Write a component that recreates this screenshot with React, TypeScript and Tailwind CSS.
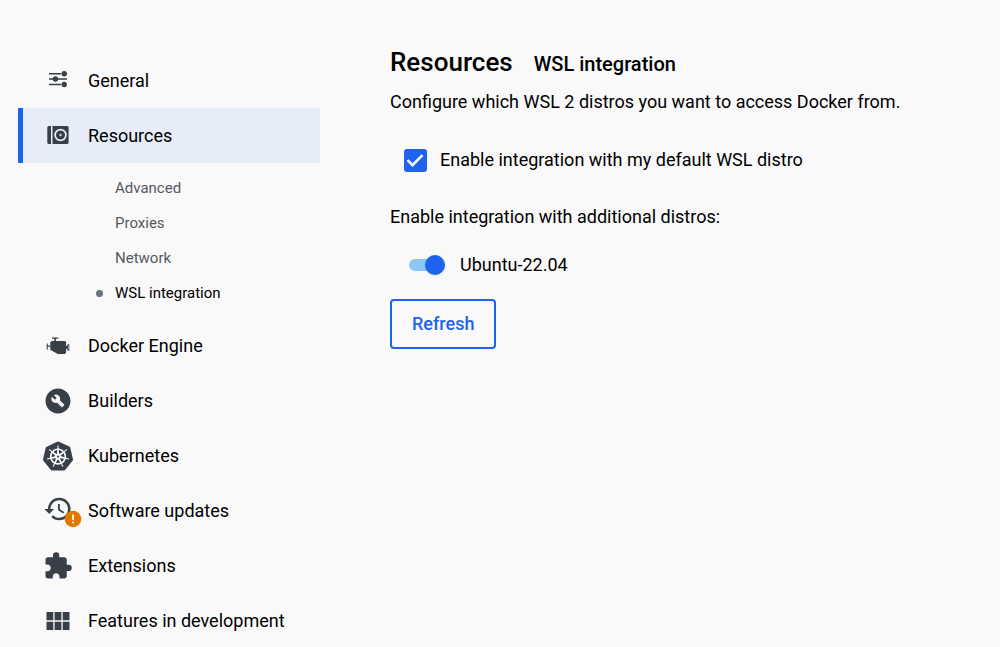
import { useState } from "react";
import type { ReactNode } from "react";
import { MdBuildCircle, MdExtension, MdHistory } from "react-icons/md";
import { SiKubernetes } from "react-icons/si";

function SlidersIcon() {
  return (
    <svg width="20" height="20" viewBox="0 0 20 20" fill="currentColor" aria-hidden="true">
      <path d="M1 1.900h12v1.600H1zM1 7.200h4v1.600H1zM10 7.200h9v1.600h-9zM1 12.700h12v1.600H1z" />
      <circle cx="16.200" cy="2.700" r="2.700" />
      <circle cx="7.400" cy="8" r="2.700" />
      <circle cx="16.200" cy="13.500" r="2.700" />
    </svg>
  );
}

function DriveIcon() {
  return (
    <svg width="22" height="20" viewBox="0 0 22 20" aria-hidden="true">
      <path d="M1.800 0H4v18H1.800A1.500 1.500 0 0 1 .3 16.500V1.500A1.500 1.500 0 0 1 1.800 0z" fill="currentColor" />
      <path d="M5.500 0h14.500a1.600 1.600 0 0 1 1.600 1.600v14.800a1.600 1.600 0 0 1-1.600 1.600H5.500z" fill="currentColor" />
      <circle cx="13.500" cy="9" r="5.400" fill="none" stroke="#e6edf8" strokeWidth="1.700" />
      <circle cx="13.500" cy="9" r="1.200" fill="#c9d0dc" />
    </svg>
  );
}

function EngineIcon() {
  return (
    <svg width="24" height="18" viewBox="0 0 24 18" fill="currentColor" aria-hidden="true">
      <path d="M6 0.500h6.300v1.300H9.900V4h9.100l1.100 1.300v10.200L19 17h-7.300L4.300 12.800V5.300L5.600 4h2.700V1.800H6z" />
      <path d="M.7 6.500h1.100v2.100h2.700v1.200H1.800v2.700H.7z" />
      <path d="M20 9h1.200V8l.7-.7h1.400v6.400h-1.400l-.7-.7v-1.300H20zM22 8.600v3.800h.500V8.600z" fillRule="evenodd" />
    </svg>
  );
}

function GridIcon() {
  return (
    <svg width="24" height="18" viewBox="0 0 24 18" fill="currentColor" aria-hidden="true">
      <path d="M.5 0h6.800v8.200H.5zM8.600 0h6.800v8.200H8.600zM16.700 0h6.800v8.200h-6.800zM.5 9.700h6.800v8.200H.5zM8.600 9.700h6.800v8.200H8.600zM16.700 9.700h6.800v8.200h-6.800z" />
    </svg>
  );
}

function UpdatesIcon() {
  return (
    <span className="relative flex pb-1">
      <MdHistory size={30} />
      <svg className="absolute left-[21px] top-4" width="18" height="18" viewBox="0 0 18 18" aria-hidden="true">
        <circle cx="9" cy="9" r="8.300" fill="#e07800" />
        <path d="M8.200 4.500h1.700v5.500H8.200zM8.200 11.500h1.700v1.700H8.200z" fill="#fff" />
      </svg>
    </span>
  );
}

type Item = { label: string; icon: ReactNode; children?: string[] };

const items: Item[] = [
  { label: "General", icon: <SlidersIcon /> },
  { label: "Resources", icon: <DriveIcon />, children: ["Advanced", "Proxies", "Network", "WSL integration"] },
  { label: "Docker Engine", icon: <EngineIcon /> },
  { label: "Builders", icon: <MdBuildCircle size={30} /> },
  { label: "Kubernetes", icon: <SiKubernetes size={30} /> },
  { label: "Software updates", icon: <UpdatesIcon /> },
  { label: "Extensions", icon: <MdExtension size={30} /> },
  { label: "Features in development", icon: <GridIcon /> },
];

function NavItem({ item }: { item: Item }) {
  const active = item.children !== undefined;
  return (
    <li>
      <a
        href="#"
        className={
          "flex h-[55px] items-center gap-[15px] border-l-[5px] pl-5 text-[18px] " +
          (active ? "border-[#1d63ed] bg-[#e6edf8]" : "border-transparent")
        }
      >
        <span className="flex w-[30px] shrink-0 justify-center text-[#393f49]">{item.icon}</span>
        {item.label}
      </a>
      {item.children && (
        <ul className="pb-[7px] pl-[78px] pt-2 text-[15px] text-[#55595f]">
          {item.children.map((child) => {
            const current = child === "WSL integration";
            return (
              <li key={child}>
                <a href="#" className={"flex h-[35px] items-center " + (current ? "text-black" : "")}>
                  <span className={"mr-3 size-[7px] rounded-full " + (current ? "bg-[#677285]" : "")} />
                  {child}
                </a>
              </li>
            );
          })}
        </ul>
      )}
    </li>
  );
}

export default function App() {
  const [defaultDistro, setDefaultDistro] = useState(true);
  const [ubuntu, setUbuntu] = useState(true);
  return (
    <div className="flex min-h-screen bg-[#f9f9fa] font-['Roboto',sans-serif] text-black">
      <nav className="w-[320px] shrink-0 pl-[18px] pt-[53px]" aria-label="Settings">
        <ul>
          {items.map((item) => (
            <NavItem key={item.label} item={item} />
          ))}
        </ul>
      </nav>
      <main className="min-w-0 flex-1 px-[70px] pt-11 text-[18px] leading-7">
        <header className="flex items-baseline gap-[21px] font-medium">
          <h1 className="text-[26px] leading-9">Resources</h1>
          <h2 className="text-[20px]">WSL integration</h2>
        </header>
        <p className="mt-2">Configure which WSL 2 distros you want to access Docker from.</p>
        <label className="mt-[30px] flex items-center pl-[13px]">
          <span className="grid place-items-center">
            <input
              type="checkbox"
              checked={defaultDistro}
              onChange={(e) => setDefaultDistro(e.target.checked)}
              className="peer col-start-1 row-start-1 size-[23px] appearance-none rounded-[3px] border-2 border-[#1d63ed] checked:bg-[#1d63ed]"
            />
            <svg
              className="pointer-events-none col-start-1 row-start-1 hidden peer-checked:block"
              width="24"
              height="24"
              viewBox="0 0 24 24"
              fill="none"
              stroke="#fff"
              strokeWidth="2.500"
              aria-hidden="true"
            >
              <path d="M4.500 12.200l5 5L19.500 7.200" />
            </svg>
          </span>
          <span className="pl-[13px]">Enable integration with my default WSL distro</span>
        </label>
        <p className="mt-[29px]">Enable integration with additional distros:</p>
        <label className="mt-5 flex items-center pl-[19px]">
          <span className="grid items-center">
            <input
              type="checkbox"
              role="switch"
              checked={ubuntu}
              onChange={(e) => setUbuntu(e.target.checked)}
              className="peer col-start-1 row-start-1 h-3 w-9 appearance-none rounded-full bg-gray-300 checked:bg-[#8bc7f5]"
            />
            <span className="pointer-events-none col-start-1 row-start-1 size-5 rounded-full bg-gray-500 shadow-sm peer-checked:justify-self-end peer-checked:bg-[#1d63ed]" />
          </span>
          <span className="pl-[15px]">Ubuntu-22.04</span>
        </label>
        <button
          type="button"
          className="mt-5 h-[50px] rounded-[4px] border-2 border-[#1d63ed] px-5 font-medium text-[#1d63ed]"
        >
          Refresh
        </button>
      </main>
    </div>
  );
}
